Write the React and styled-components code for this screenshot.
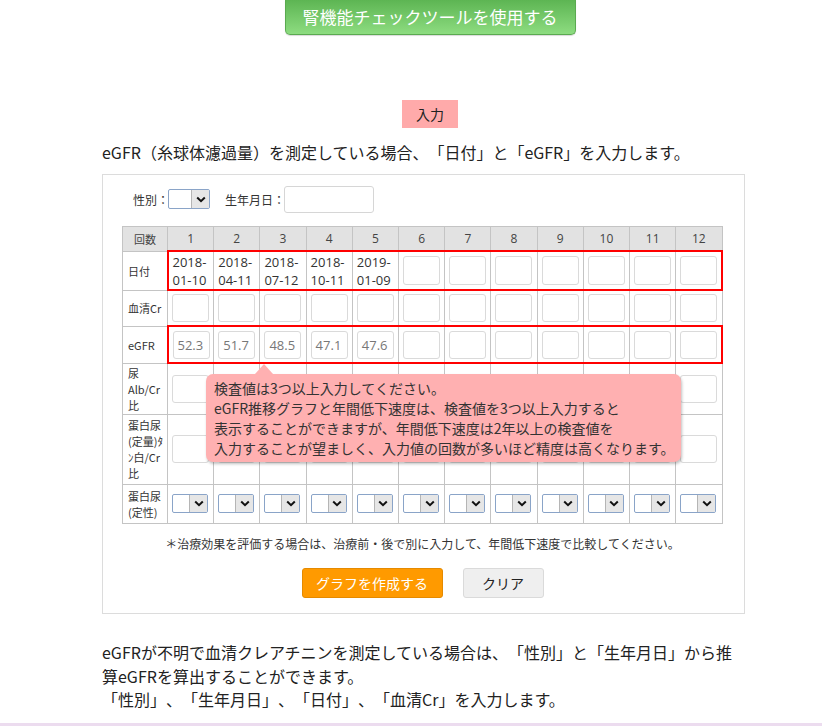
import React from 'react';
import styled, { createGlobalStyle } from 'styled-components';

const GlobalStyle = createGlobalStyle`
  html, body {
    margin: 0;
    padding: 0;
    background: #fff;
  }
  body {
    font-family: "Noto Sans CJK JP", "Noto Sans", sans-serif;
    color: #222;
    text-spacing-trim: space-all;
  }
`;

const dates = ['2018-01-10', '2018-04-11', '2018-07-12', '2018-10-11', '2019-01-09'];
const egfr = ['52.3', '51.7', '48.5', '47.1', '47.6'];
const cols = Array.from({ length: 12 }, (_, i) => i + 1);

const Page = styled.div`
  width: 822px;
  min-height: 726px;
  display: flex;
  flex-direction: column;
  overflow: hidden;
`;

const TopBlock = styled.div`
  width: 656px;
  margin-left: 102px;
  display: flex;
  flex-direction: column;
  align-items: center;
`;

const ToolButton = styled.div`
  width: 291px;
  height: 35px;
  box-sizing: border-box;
  border: 1px solid #5aaa50;
  border-top: none;
  border-radius: 0 0 5px 5px;
  background: linear-gradient(#5db553, #8ddc80);
  color: #fff;
  font-size: 17px;
  line-height: 34px;
  text-align: center;
  box-shadow: 0 1px 1px rgba(0, 0, 0, 0.15);
`;

const InputLabel = styled.div`
  margin-top: 65px;
  width: 56px;
  height: 28px;
  background: #ffaaaa;
  color: #222;
  font-size: 14px;
  line-height: 28px;
  text-align: center;
`;

const Content = styled.div`
  width: 643px;
  margin-left: 102px;
`;

const Lead = styled.p`
  margin: 13px 0 10px;
  font-size: 16px;
  line-height: 23px;
  white-space: nowrap;
`;

const Panel = styled.div`
  position: relative;
  box-sizing: border-box;
  height: 440px;
  border: 1px solid #dcdcdc;
  padding: 11px 21px 0 19px;
`;

const PersonRow = styled.div`
  display: flex;
  align-items: center;
  padding-left: 11px;
  height: 26px;
  font-size: 12px;
  color: #333;
`;

const FieldLabel = styled.span`
  margin-left: ${(p) => (p.$first ? '0' : '15px')};
  margin-right: ${(p) => (p.$first ? '-1px' : '-1px')};
`;

const SelectBox = styled.div`
  display: flex;
  box-sizing: border-box;
  width: ${(p) => p.$w}px;
  height: ${(p) => p.$h}px;
  border: 1px solid #8aa4c8;
  border-radius: 2px;
  background: #fff;
  overflow: hidden;
`;

const SelectArrow = styled.div`
  margin-left: auto;
  width: 17px;
  border-left: 1px solid #b5b5b5;
  background: #e6e6e6;
  display: flex;
  align-items: center;
  justify-content: center;
`;

const Select = ({ w, h }) => (
  <SelectBox $w={w} $h={h}>
    <SelectArrow>
      <svg width="10" height="7" viewBox="0 0 10 7">
        <path d="M1.2 1.5 L5 5.2 L8.8 1.5" fill="none" stroke="#111" strokeWidth="2" />
      </svg>
    </SelectArrow>
  </SelectBox>
);

const TextBox = styled.div`
  box-sizing: border-box;
  width: 90px;
  height: 27px;
  border: 1px solid #d6d6d6;
  border-radius: 3px;
`;

const Table = styled.table`
  margin-top: 14px;
  width: 601px;
  table-layout: fixed;
  border-collapse: collapse;
  font-family: "Noto Sans CJK JP", "Noto Sans", sans-serif;
  font-size: 12px;
  color: #333;
`;

const HeadCell = styled.th`
  width: ${(p) => (p.$label ? '44px' : 'auto')};
  height: 23px;
  padding: 0;
  background: #e2e2e2;
  border: 1px solid #c4c4c4;
  font-family: ${(p) => (p.$label ? '"Noto Sans CJK JP", sans-serif' : '"Open Sans", "Noto Sans", sans-serif')};
  font-weight: normal;
  font-size: ${(p) => (p.$label ? '11px' : '12px')};
  color: #444;
  text-align: center;
`;

const LabelCell = styled.td`
  height: ${(p) => p.$h}px;
  padding: 0 0 0 5px;
  border: 1px solid #c4c4c4;
  font-size: 11px;
  line-height: 16px;
  color: #333;
  word-break: break-all;
`;

const Cell = styled.td`
  padding: 0 0 0 4px;
  border: 1px solid #c4c4c4;
  vertical-align: middle;
  ${(p) => p.$hl && 'border-top: 2px solid #f00; border-bottom: 2px solid #f00;'}
  ${(p) => p.$hlFirst && 'border-left: 2px solid #f00;'}
  ${(p) => p.$hlLast && 'border-right: 2px solid #f00;'}
`;

const CellInput = styled.div`
  box-sizing: border-box;
  width: 37px;
  height: ${(p) => p.$h || 28}px;
  border: 1px solid #dadada;
  border-radius: 3px;
  padding-left: 4px;
  font-family: "Open Sans", "Noto Sans", sans-serif;
  font-size: 13px;
  line-height: 26px;
  color: #777;
`;

const DateText = styled.div`
  font-family: "Open Sans", "Noto Sans", sans-serif;
  font-size: 13px;
  line-height: 18px;
  color: #333;
`;

const Tooltip = styled.div`
  position: absolute;
  left: 103px;
  top: 199px;
  width: 475px;
  box-sizing: border-box;
  padding: 4px 8px;
  background: #ffb0b1;
  border-radius: 7px;
  box-shadow: 1px 2px 3px rgba(0, 0, 0, 0.25);
  font-size: 14px;
  line-height: 20px;
  color: #333;
  white-space: nowrap;

  &::before {
    content: '';
    position: absolute;
    left: 49px;
    top: -10px;
    border-left: 9px solid transparent;
    border-right: 9px solid transparent;
    border-bottom: 10px solid #ffb0b1;
  }
`;

const Note = styled.p`
  margin: 12px 0 0;
  font-size: 12px;
  line-height: 16px;
  color: #333;
  text-align: center;
`;

const Buttons = styled.div`
  display: flex;
  justify-content: center;
  gap: 20px;
  margin-top: 16px;
`;

const Button = styled.div`
  box-sizing: border-box;
  width: ${(p) => p.$w}px;
  height: 30px;
  border: 1px solid ${(p) => (p.$primary ? '#e58a00' : '#dadada')};
  border-radius: 3px;
  background: ${(p) => (p.$primary ? '#ff9a00' : '#efefef')};
  color: ${(p) => (p.$primary ? '#fff' : '#222')};
  font-size: 14px;
  line-height: 28px;
  text-align: center;
`;

const Body = styled.p`
  margin: 27px 0 0;
  font-size: 16px;
  line-height: 23.5px;
`;

const Footer = styled.div`
  margin-top: auto;
  height: 3px;
  background: #ecdcef;
`;

const highlightProps = (i) => ({
  $hl: true,
  $hlFirst: i === 0,
  $hlLast: i === 11,
});

export default function App() {
  return (
    <Page>
      <GlobalStyle />
      <TopBlock>
        <ToolButton>腎機能チェックツールを使用する</ToolButton>
        <InputLabel>入力</InputLabel>
      </TopBlock>
      <Content>
        <Lead>eGFR（糸球体濾過量）を測定している場合、「日付」と「eGFR」を入力します。</Lead>
        <Panel>
          <PersonRow>
            <FieldLabel $first>性別：</FieldLabel>
            <Select w={42} h={20} />
            <FieldLabel>生年月日：</FieldLabel>
            <TextBox />
          </PersonRow>
          <Table>
            <thead>
              <tr>
                <HeadCell $label>回数</HeadCell>
                {cols.map((c) => (
                  <HeadCell key={c}>{c}</HeadCell>
                ))}
              </tr>
            </thead>
            <tbody>
              <tr>
                <LabelCell $h={38}>日付</LabelCell>
                {cols.map((c, i) => (
                  <Cell key={c} {...highlightProps(i)}>
                    {dates[i] ? (
                      <DateText>
                        {dates[i].slice(0, 5)}
                        <br />
                        {dates[i].slice(5)}
                      </DateText>
                    ) : (
                      <CellInput $h={29} />
                    )}
                  </Cell>
                ))}
              </tr>
              <tr>
                <LabelCell $h={35}>血清Cr</LabelCell>
                {cols.map((c) => (
                  <Cell key={c}>
                    <CellInput />
                  </Cell>
                ))}
              </tr>
              <tr>
                <LabelCell $h={36}>eGFR</LabelCell>
                {cols.map((c, i) => (
                  <Cell key={c} {...highlightProps(i)}>
                    <CellInput>{egfr[i] || ''}</CellInput>
                  </Cell>
                ))}
              </tr>
              <tr>
                <LabelCell $h={50}>
                  尿
                  <br />
                  Alb/Cr
                  <br />比
                </LabelCell>
                {cols.map((c) => (
                  <Cell key={c}>
                    <CellInput />
                  </Cell>
                ))}
              </tr>
              <tr>
                <LabelCell $h={69}>
                  蛋白尿
                  <br />
                  (定量)ﾀ
                  <br />
                  ﾝ白/Cr
                  <br />比
                </LabelCell>
                {cols.map((c) => (
                  <Cell key={c}>
                    <CellInput />
                  </Cell>
                ))}
              </tr>
              <tr>
                <LabelCell $h={38}>
                  蛋白尿
                  <br />
                  (定性)
                </LabelCell>
                {cols.map((c) => (
                  <Cell key={c}>
                    <Select w={36} h={19} />
                  </Cell>
                ))}
              </tr>
            </tbody>
          </Table>
          <Note>＊治療効果を評価する場合は、治療前・後で別に入力して、年間低下速度で比較してください。</Note>
          <Buttons>
            <Button $primary $w={141}>グラフを作成する</Button>
            <Button $w={81}>クリア</Button>
          </Buttons>
          <Tooltip>
            検査値は3つ以上入力してください。
            <br />
            eGFR推移グラフと年間低下速度は、検査値を3つ以上入力すると
            <br />
            表示することができますが、年間低下速度は2年以上の検査値を
            <br />
            入力することが望ましく、入力値の回数が多いほど精度は高くなります。
          </Tooltip>
        </Panel>
        <Body>
          eGFRが不明で血清クレアチニンを測定している場合は、「性別」と「生年月日」から推算eGFRを算出することができます。
          <br />
          「性別」、「生年月日」、「日付」、「血清Cr」を入力します。
        </Body>
      </Content>
      <Footer />
    </Page>
  );
}
